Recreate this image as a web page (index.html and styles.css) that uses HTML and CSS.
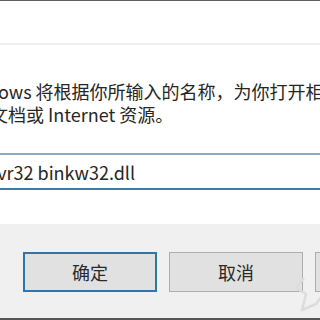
FILE: index.html
```html
<!DOCTYPE html>
<html lang="zh-CN">
<head>
<meta charset="utf-8">
<title>运行</title>
<link rel="stylesheet" href="styles.css">
</head>
<body>
<div class="dialog">
  <div class="titlebar"></div>
  <div class="content">
    <p class="prompt">Windows 将根据你所输入的名称，为你打开相应的程序、文件<br>夹、文档或 Internet 资源。</p>
    <div class="field"><span class="field-text">regsvr32 binkw32.dll</span></div>
  </div>
  <div class="footer">
    <button class="btn btn-default">确定</button>
    <button class="btn">取消</button>
    <button class="btn">浏览(B)...</button>
  </div>
  <svg class="watermark" width="40" height="50" viewBox="0 0 40 50">
    <polyline points="14,2 6,12 16,18 12,34 26,28 32,20" fill="none" stroke="#dcdcdc" stroke-width="2.5" stroke-linejoin="round"/>
  </svg>
</div>
</body>
</html>
```
FILE: styles.css
```css
html, body {
  margin: 0;
  padding: 0;
  background: #ffffff;
}
.dialog {
  position: relative;
  width: 320px;
  height: 320px;
  overflow: hidden;
  display: flex;
  flex-direction: column;
  font-family: "Noto Sans CJK SC", "Noto Sans", sans-serif;
  color: #262626;
  border-top: 1px solid #606060;
  border-bottom: 2px solid #555555;
  box-sizing: border-box;
}
.titlebar {
  height: 42px;
  flex-shrink: 0;
  background: #ffffff;
  border-bottom: 2px solid #f0f0f0;
}
.content {
  height: 179px;
  flex-shrink: 0;
  background: #ffffff;
  display: flex;
  flex-direction: column;
}
.prompt {
  margin: 35px 0 0 -46px;
  font-size: 18px;
  line-height: 23px;
  white-space: nowrap;
  text-indent: 1px;
}
.field {
  margin: 27px 0 0 -44px;
  width: 400px;
  height: 33px;
  flex-shrink: 0;
  border-top: 2px solid #8eaabb;
  border-bottom: 2px solid #3b7cab;
  background: #ffffff;
  display: flex;
  align-items: center;
  padding-left: 6px;
  font-size: 18px;
  white-space: nowrap;
}
.field-text {
  color: #262626;
}
.footer {
  flex: 1;
  background: #f0f0f0;
  display: flex;
  align-items: flex-start;
  gap: 12px;
  padding: 28px 0 0 23px;
}
.btn {
  flex-shrink: 0;
  width: 134px;
  height: 40px;
  margin: 0;
  padding: 0;
  background: #e1e1e1;
  border: 1px solid #adadad;
  font-family: "Noto Sans CJK SC", "Noto Sans", sans-serif;
  font-size: 18px;
  color: #2a2a2a;
  white-space: nowrap;
}
.btn-default {
  border: 2px solid #2f75ab;
}
.watermark {
  position: absolute;
  left: 290px;
  top: 275px;
}
```
